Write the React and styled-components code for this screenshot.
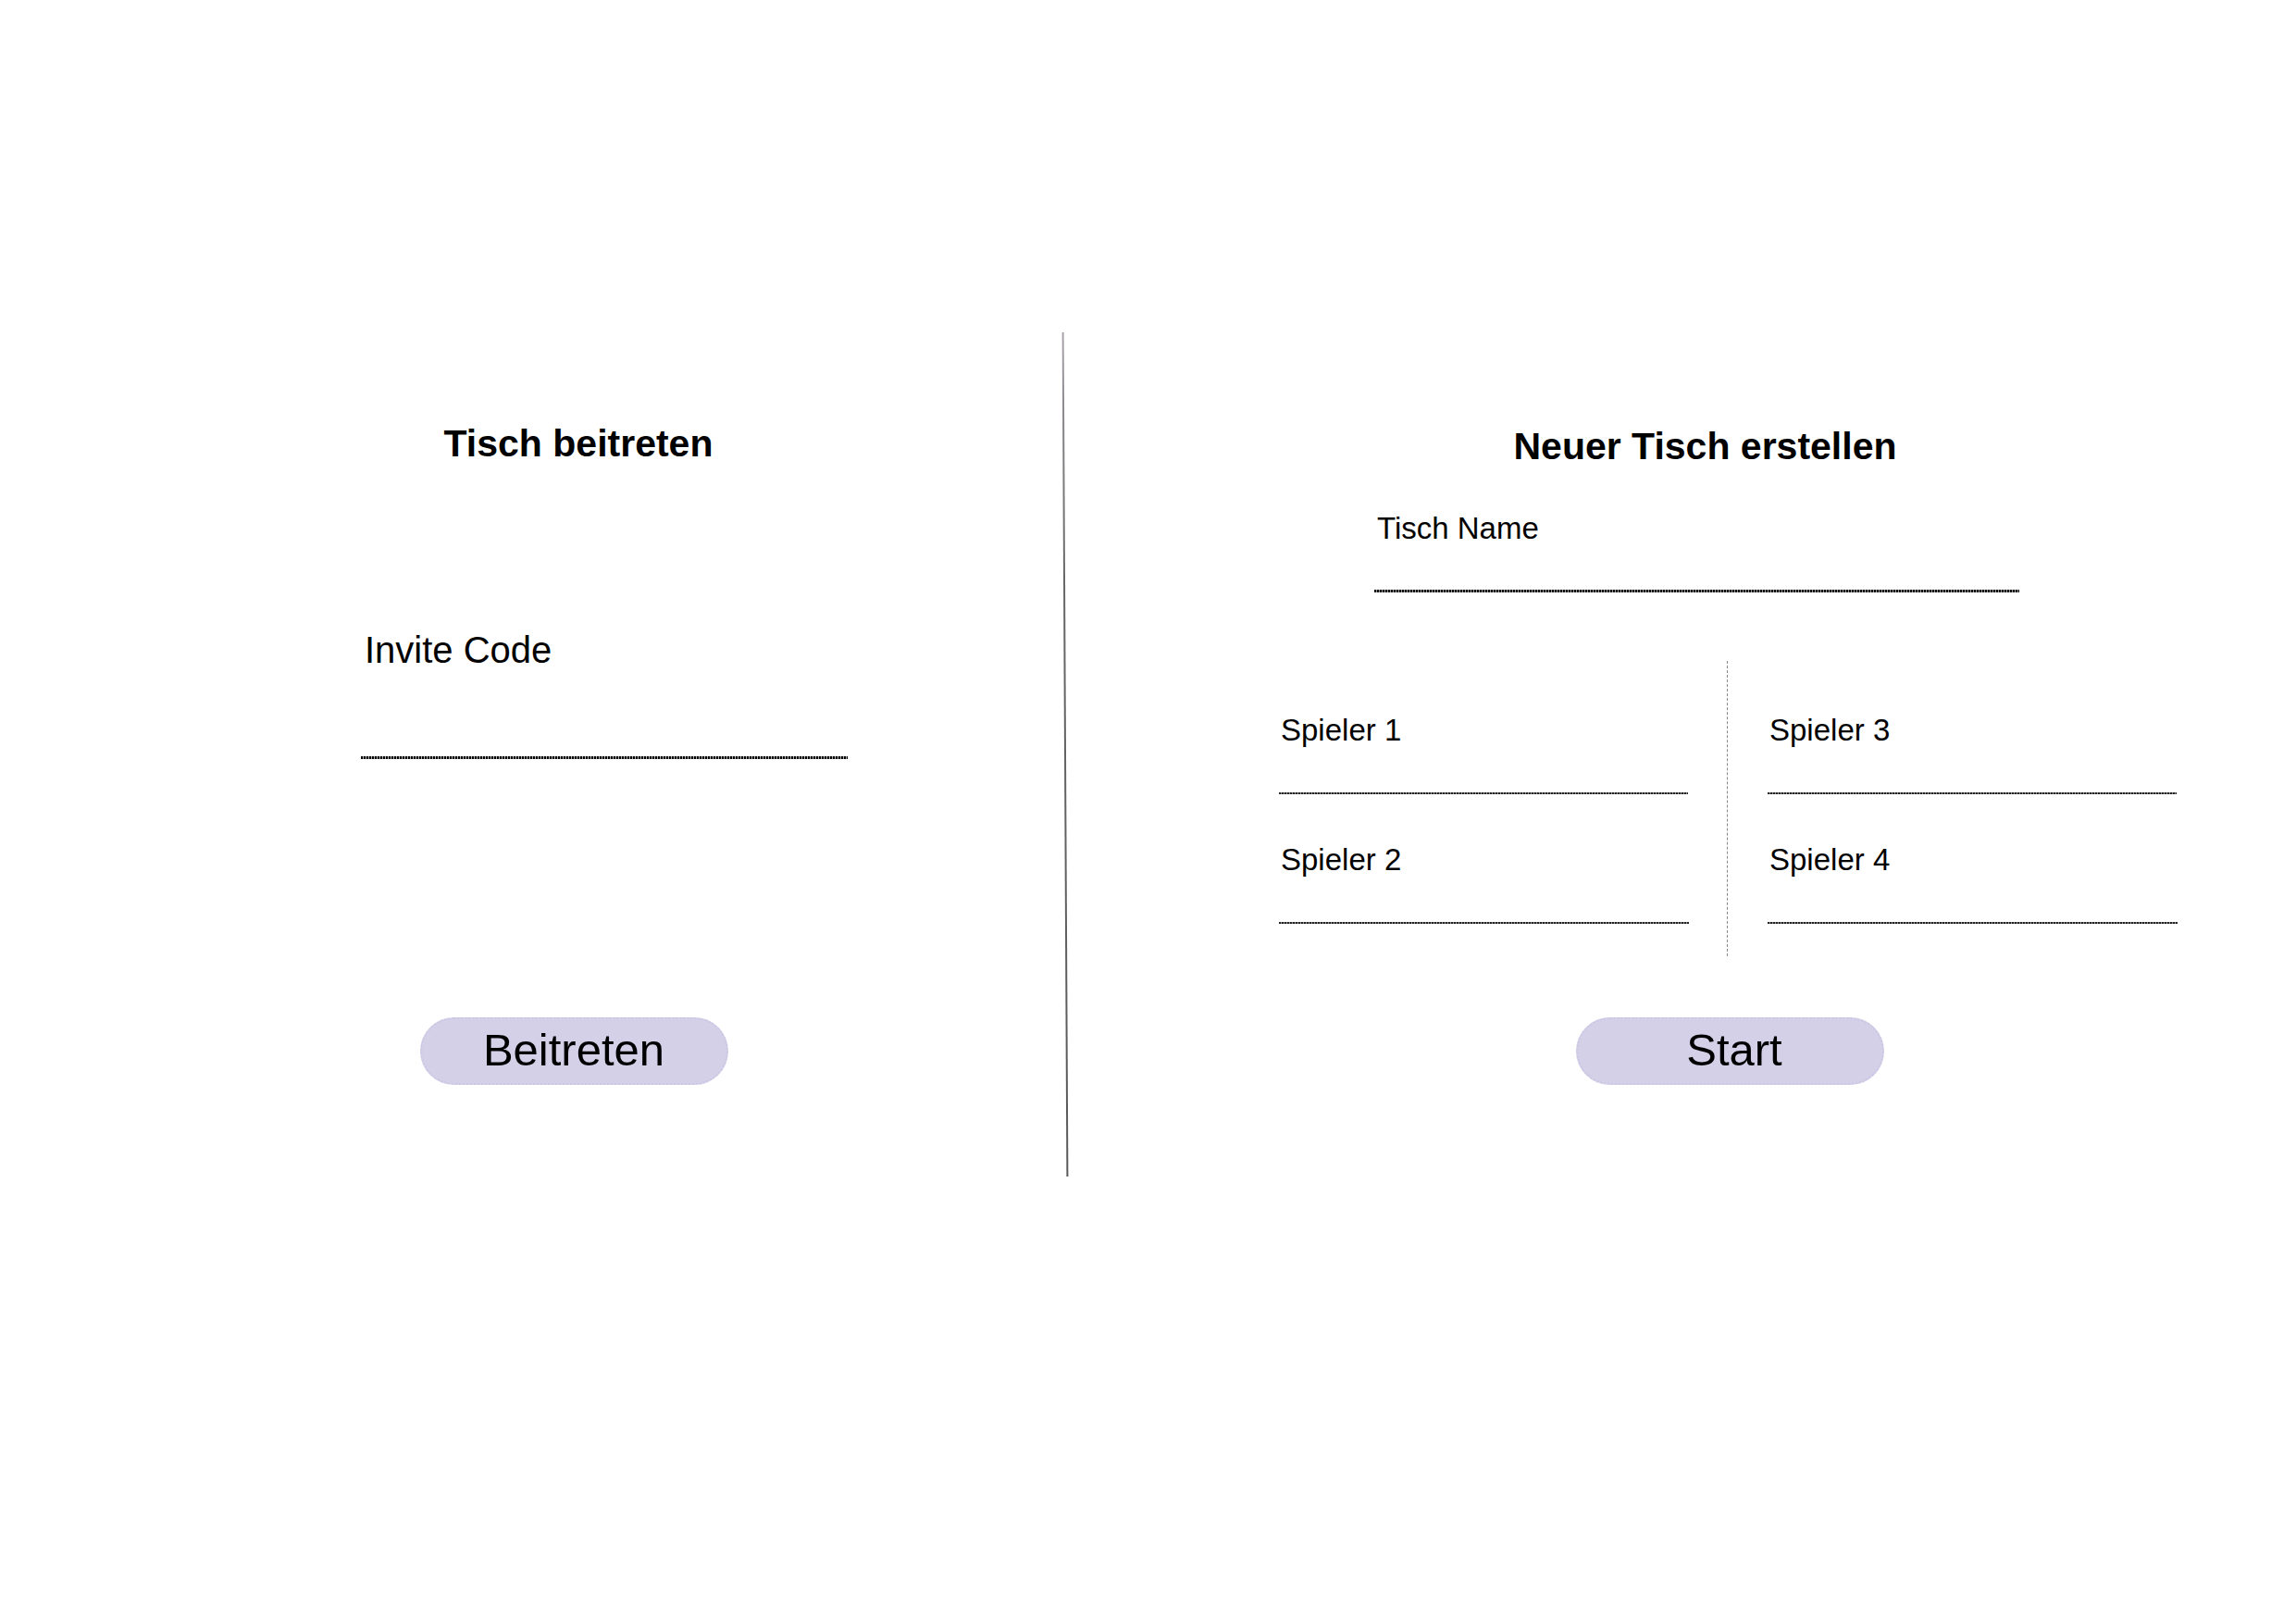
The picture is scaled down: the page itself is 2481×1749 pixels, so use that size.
import React from 'react';
import styled, { createGlobalStyle } from 'styled-components';

const GlobalStyle = createGlobalStyle`
  html, body {
    margin: 0;
    padding: 0;
    background: #ffffff;
  }

  body {
    font-family: 'Liberation Sans', Arial, sans-serif;
    color: #000;
  }
`;

const StyledPage = styled.main`
  display: flex;
  align-items: flex-start;
  width: 2481px;
  height: 1749px;
  padding-top: 359px;
  box-sizing: border-box;
`;

const StyledPanel = styled.section`
  display: flex;
  flex-direction: column;
  align-items: flex-start;
  width: ${({ $width }) => $width}px;
  padding-left: ${({ $inset }) => $inset}px;
  box-sizing: border-box;
  flex-shrink: 0;
`;

const StyledColumn = styled.div`
  display: flex;
  flex-direction: column;
  align-items: flex-start;
  width: ${({ $width }) => $width}px;
`;

const StyledTitle = styled.h2`
  align-self: stretch;
  margin: ${({ $top }) => $top}px 0 0 0;
  padding-right: ${({ $shift }) => $shift || 0}px;
  font-size: 41px;
  font-weight: 700;
  line-height: 1;
  text-align: center;
`;

const StyledDivider = styled.div`
  width: 2px;
  height: 912px;
  margin-left: 1px;
  flex-shrink: 0;
  background: linear-gradient(#aaa4ad 0%, #8a868c 10%, #666 30%, #5a5a5a 100%);
  transform: rotate(-0.3deg);
`;

const StyledField = styled.label`
  display: flex;
  flex-direction: column;
  width: ${({ $width }) => $width}px;
  margin-top: ${({ $top }) => $top}px;
  margin-left: ${({ $left }) => $left || 0}px;

  span {
    padding-left: ${({ $indent }) => $indent}px;
    font-size: ${({ $size }) => $size}px;
    line-height: 1;
  }

  input {
    height: ${({ $gap, $weight }) => $gap + $weight}px;
    padding: 0;
    border: 0;
    background: repeating-linear-gradient(
        90deg,
        ${({ $line }) => $line} 0 2px,
        ${({ $gapColor }) => $gapColor} 2px 3px
      )
      left bottom / 100% ${({ $weight }) => $weight}px no-repeat;
    outline: none;
    font-family: inherit;
    font-size: ${({ $size }) => $size}px;
  }
`;

const StyledPlayers = styled.div`
  display: grid;
  grid-template-columns: 442px 2px 443px;
  column-gap: 42px;
  margin-top: 74px;
  padding: 58px 0 35px;
`;

const StyledPlayerColumn = styled.div`
  display: flex;
  flex-direction: column;
`;

const StyledGridRule = styled.div`
  width: 1px;
  margin-top: -58px;
  margin-bottom: -35px;
  border-left: 1px dashed #888;
`;

const StyledButton = styled.button`
  align-self: center;
  width: 333px;
  height: 73px;
  margin-top: ${({ $top }) => $top}px;
  margin-left: ${({ $nudge }) => $nudge || 0}px;
  padding: 0 0 2px ${({ $pad }) => $pad || 0}px;
  border: 2px dotted #cbc6e3;
  border-radius: 37px;
  background: #d4d0e8;
  color: #000;
  font-family: 'Liberation Sans', Arial, sans-serif;
  font-size: 49px;
  line-height: 1;
  cursor: pointer;
`;

const players = [
  ['Spieler 1', 'Spieler 2'],
  ['Spieler 3', 'Spieler 4'],
];

const PlayerField = ({ label, first }) => (
  <StyledField
    $width={first ? 442 : 443}
    $top={first ? 0 : 54}
    $indent={2}
    $size={33}
    $gap={51}
    $weight={2}
    $line="#222"
    $gapColor="#8c8c8c">
    <span>{label}</span>
    <input type="text" />
  </StyledField>
);

const App = () => (
  <>
    <GlobalStyle />
    <StyledPage>
      <StyledPanel $width={1149} $inset={390}>
        <StyledColumn $width={470}>
          <StyledTitle $top={100}>Tisch beitreten</StyledTitle>

          <StyledField
            $width={526}
            $top={182}
            $indent={4}
            $size={40}
            $gap={95}
            $weight={3}
            $line="#000"
            $gapColor="#aaa">
            <span>Invite Code</span>
            <input type="text" />
          </StyledField>

          <StyledButton $top={279} $nudge={-10}>
            Beitreten
          </StyledButton>
        </StyledColumn>
      </StyledPanel>

      <StyledDivider />

      <StyledPanel $width={1329} $inset={230}>
        <StyledColumn $width={971}>
          <StyledTitle $top={103} $shift={50}>
            Neuer Tisch erstellen
          </StyledTitle>

          <StyledField
            $width={697}
            $top={51}
            $left={103}
            $indent={3}
            $size={33}
            $gap={50}
            $weight={3}
            $line="#111"
            $gapColor="#999">
            <span>Tisch Name</span>
            <input type="text" />
          </StyledField>

          <StyledPlayers>
            <StyledPlayerColumn>
              {players[0].map((p, i) => (
                <PlayerField key={p} label={p} first={i === 0} />
              ))}
            </StyledPlayerColumn>
            <StyledGridRule />
            <StyledPlayerColumn>
              {players[1].map((p, i) => (
                <PlayerField key={p} label={p} first={i === 0} />
              ))}
            </StyledPlayerColumn>
          </StyledPlayers>

          <StyledButton $top={66} $nudge={3} $pad={10}>
            Start
          </StyledButton>
        </StyledColumn>
      </StyledPanel>
    </StyledPage>
  </>
);

export default App;
